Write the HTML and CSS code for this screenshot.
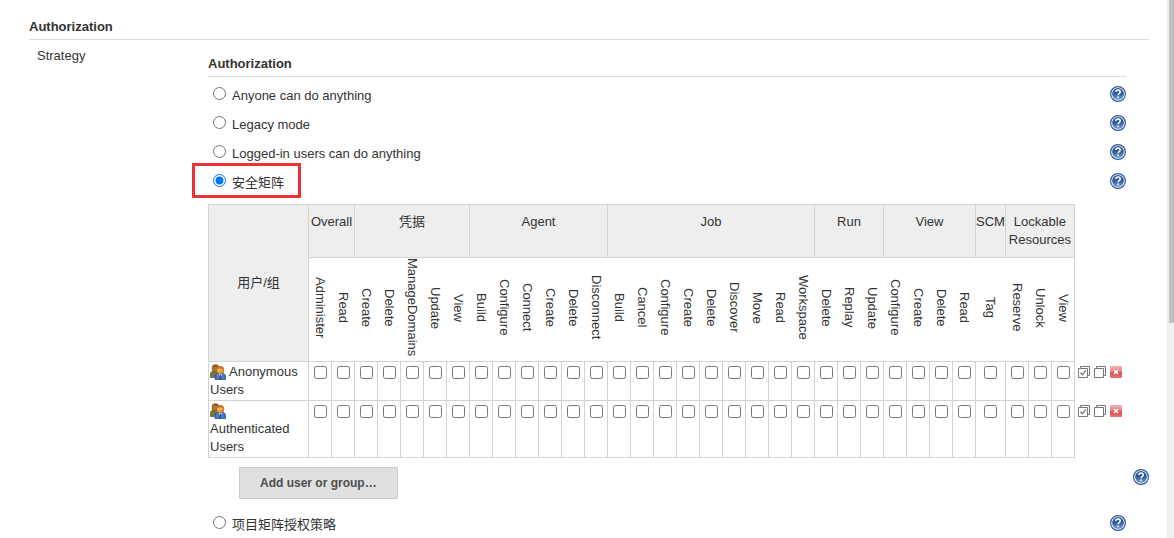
FILE: index.html
```
<!DOCTYPE html>
<html lang="zh-CN">
<head>
<meta charset="utf-8">
<title>Authorization</title>
<link rel="stylesheet" href="styles.css">
</head>
<body>
<svg class="symbols" aria-hidden="true">
  <defs>
    <linearGradient id="blue" x1="0" y1="0" x2="0" y2="1"><stop offset="0" stop-color="#2f5590"/><stop offset=".5" stop-color="#345d9b"/><stop offset="1" stop-color="#79a7da"/></linearGradient>
    <linearGradient id="red" x1="0" y1="0" x2="0" y2="1"><stop offset="0" stop-color="#f2b5b5"/><stop offset=".5" stop-color="#e67c7c"/><stop offset=".55" stop-color="#da5050"/><stop offset="1" stop-color="#ee7373"/></linearGradient>
    <linearGradient id="face" x1="0" y1="0" x2="1" y2="1"><stop offset="0" stop-color="#ffd873"/><stop offset="1" stop-color="#d9822b"/></linearGradient>
    <symbol id="help" viewBox="0 0 16 16">
      <circle cx="8" cy="8" r="7.400" fill="#fff" stroke="#315a98" stroke-width="1.200"/>
      <circle cx="8" cy="8" r="5.900" fill="url(#blue)"/>
      <path d="M5.900 6.100C5.900 4.700 6.800 4 8 4c1.400 0 2.200.8 2.200 1.900 0 1.600-2.100 1.700-2.100 3.400" fill="none" stroke="#fff" stroke-width="1.500"/>
      <rect x="7.300" y="10.500" width="1.600" height="1.600" fill="#fff"/>
    </symbol>
    <symbol id="users" viewBox="0 0 16 16">
      <path d="M.5 13.500V9.500Q.7 7.500 3 7.300H6L8 10V13.500Z" fill="#6b7b3d" stroke="#4f5c2b" stroke-width=".7"/>
      <rect x="2.200" y=".8" width="6.600" height="7" rx="2.800" fill="#bd7424" stroke="#80501f" stroke-width=".8"/>
      <path d="M2.500 3Q4 0 8 1.500L7 3Z" fill="#8e551d"/>
      <path d="M5 15.500V12Q5.200 9.700 8 9.300h4.500q2.800.4 3 2.700v3.500Z" fill="#4c7bc4" stroke="#274d91" stroke-width=".8"/>
      <path d="M8.200 9.300 10.300 13.500 12.400 9.300Z" fill="#fff"/>
      <path d="m9.800 10.200-.3 4 .8 1.300.8-1.300-.3-4Z" fill="#27498b"/>
      <rect x="6.700" y="2.500" width="7" height="7.300" rx="3" fill="url(#face)" stroke="#a65f1c" stroke-width=".8"/>
      <path d="M7 5.200Q7.200 2.400 10.200 2.500q3 .2 3.300 3Q10.500 3.800 7 5.200Z" fill="#c5771e"/>
    </symbol>
    <symbol id="select-all" viewBox="0 0 12 12">
      <path d="M2.500 2.500V.5h9v9h-2M.5 2.500h9v9h-9Z" fill="none" stroke="#777"/>
      <path d="m2.500 6.800 1.800 2 3.500-4.500" fill="none" stroke="#777" stroke-width="1.300"/>
    </symbol>
    <symbol id="select-none" viewBox="0 0 12 12">
      <path d="M2.500 2.500V.5h9v9h-2M.5 2.500h9v9h-9Z" fill="none" stroke="#777"/>
    </symbol>
    <symbol id="remove" viewBox="0 0 12 12">
      <rect width="12" height="12" rx=".7" fill="url(#red)"/>
      <path d="m3.900 3.900 4.200 4m0-4-4.200 4" stroke="#c94f4f" stroke-width="2.800"/>
      <path d="m3.900 3.900 4.200 4m0-4-4.200 4" stroke="#fff" stroke-width="1.600"/>
    </symbol>
  </defs>
</svg>
<div class="page">
  <main class="content">
    <h1 class="heading">Authorization</h1>
    <div class="setting">
      <div class="setting-name">Strategy</div>
      <div class="setting-body">
        <h2 class="heading inset">Authorization</h2>
        <div class="options inset">
          <div class="option"><label><input type="radio" name="strategy">Anyone can do anything</label><button class="icon-button" aria-label="Help"><svg class="help"><use href="#help"/></svg></button></div>
          <div class="option"><label><input type="radio" name="strategy">Legacy mode</label><button class="icon-button" aria-label="Help"><svg class="help"><use href="#help"/></svg></button></div>
          <div class="option"><label><input type="radio" name="strategy">Logged-in users can do anything</label><button class="icon-button" aria-label="Help"><svg class="help"><use href="#help"/></svg></button></div>
          <div class="option marked"><label><input type="radio" name="strategy" checked>安全矩阵</label><button class="icon-button" aria-label="Help"><svg class="help"><use href="#help"/></svg></button></div>
        </div>
        <table class="matrix">
          <thead>
            <tr id="groups"><th class="subject" rowspan="2" scope="col">用户/组</th></tr>
            <tr id="permissions"></tr>
          </thead>
          <tbody id="subjects"></tbody>
        </table>
        <div class="add-row"><button class="add">Add user or group…</button><button class="icon-button" aria-label="Help"><svg class="help"><use href="#help"/></svg></button></div>
        <div class="options inset">
          <div class="option"><label><input type="radio" name="strategy">项目矩阵授权策略</label><button class="icon-button" aria-label="Help"><svg class="help"><use href="#help"/></svg></button></div>
        </div>
      </div>
    </div>
  </main>
  <div class="scroll-track" aria-hidden="true"><div class="scroll-thumb"></div></div>
</div>
<script src="matrix.js"></script>
</body>
</html>
```
FILE: styles.css
```
* { box-sizing: border-box; }
body {
  margin: 0;
  background: #fff;
  color: #333;
  font: 13px/18px "Liberation Sans", Arial, "Noto Sans CJK SC", sans-serif;
}
.symbols { position: absolute; width: 0; height: 0; }
.page { display: flex; min-height: 100vh; }
.content { flex: 1; min-width: 0; padding: 18px 18px 0 29px; }
.heading {
  margin: 0;
  padding-bottom: 3px;
  border-bottom: 1px solid #ddd;
  font-size: 13px;
  line-height: 18px;
}
.setting { display: flex; padding-top: 7px; }
.setting-name { flex: 0 0 179px; padding-left: 8px; }
.setting-body { flex: 1; min-width: 0; padding-top: 8px; }
.inset { margin-right: 23px; }
.options { padding-top: 3px; }
.option {
  position: relative;
  display: flex;
  justify-content: space-between;
  align-items: flex-start;
  height: 29px;
  padding-top: 6px;
}
.option label { display: flex; align-items: flex-start; padding: 1px 0 0 5px; }
.option input { width: 13px; height: 13px; margin: 0 6px 0 0; }
.marked::before {
  content: "";
  position: absolute;
  left: -16px;
  top: -4px;
  width: 103px;
  height: 29px;
  border: 3px solid #ed3237;
  pointer-events: none;
}
.icon-button { display: flex; padding: 0; border: 0; background: none; cursor: pointer; }
.help { display: block; width: 16px; height: 16px; }

.matrix { margin-top: 8px; border-collapse: collapse; }
.matrix th, .matrix td { padding: 0; border: 1px solid #d3d3cb; font-weight: normal; }
.matrix .subject { width: 100px; background: #eee; text-align: center; vertical-align: middle; }
.matrix .group { height: 53px; padding-top: 8px; background: #eee; vertical-align: top; }
.matrix .permission { height: 104px; padding-bottom: 4px; border-width: 1px 0; vertical-align: middle; }
.matrix .permission:last-child { border-right-width: 1px; }
.permission div { display: flex; justify-content: center; }
.permission span { writing-mode: vertical-rl; }
.matrix .name { padding: 1px; vertical-align: top; }
.name svg { width: 16px; height: 16px; margin-right: 3px; vertical-align: -4px; }
.matrix .check { padding: 4px 4px 0 5px; vertical-align: top; text-align: center; line-height: 0; }
.check input { width: 13px; height: 13px; margin: 0; }
.matrix .actions { border: 0; padding: 4px 0 0 3px; vertical-align: top; }
.actions div { display: flex; gap: 4px; }
.actions svg { display: block; width: 12px; height: 12px; }

.add-row { display: flex; justify-content: space-between; padding: 9px 0 7px 31px; }
.add-row .icon-button { align-self: flex-start; padding-top: 2px; }
.add {
  padding: 6px 20px;
  border: 1px solid #ccc;
  background: #e0e0e0;
  color: #4d4d4d;
  font: bold 12px/18px "Liberation Sans", Arial, sans-serif;
}
.scroll-track { flex: 0 0 7px; padding-left: 2px; background: #f1f1f1; }
.scroll-thumb { height: 60vh; background: #c1c1c1; }
```
FILE: matrix.js
```
const groups = [
  ["Overall", ["Administer", "Read"]],
  ["凭据", ["Create", "Delete", "ManageDomains", "Update", "View"]],
  ["Agent", ["Build", "Configure", "Connect", "Create", "Delete", "Disconnect"]],
  ["Job", ["Build", "Cancel", "Configure", "Create", "Delete", "Discover", "Move", "Read", "Workspace"]],
  ["Run", ["Delete", "Replay", "Update"]],
  ["View", ["Configure", "Create", "Delete", "Read"]],
  ["SCM", ["Tag"]],
  ["Lockable<br>Resources", ["Reserve", "Unlock", "View"]]
];
const subjects = [
  ["Anonymous Users", "Anonymous<br>Users"],
  ["Authenticated Users", "<br>Authenticated<br>Users"]
];
const actions = [["select-all", "Select all"], ["select-none", "Unselect all"], ["remove", "Remove"]];

document.getElementById("groups").insertAdjacentHTML("beforeend",
  groups.map(([name, items]) => `<th class="group" scope="colgroup" colspan="${items.length}">${name}</th>`).join(""));
document.getElementById("permissions").innerHTML =
  groups.flatMap(([, items]) => items).map(p => `<th class="permission" scope="col"><div><span>${p}</span></div></th>`).join("");
document.getElementById("subjects").innerHTML = subjects.map(([label, text]) =>
  `<tr><td class="name"><svg><use href="#users"/></svg>${text}</td>` +
  groups.flatMap(([g, items]) => items.map(p =>
    `<td class="check"><input type="checkbox" aria-label="${label}: ${g.replace("<br>", " ")} ${p}"></td>`)).join("") +
  `<td class="actions"><div>` +
  actions.map(([icon, title]) => `<button class="icon-button" aria-label="${title}"><svg><use href="#${icon}"/></svg></button>`).join("") +
  `</div></td></tr>`).join("");
```
